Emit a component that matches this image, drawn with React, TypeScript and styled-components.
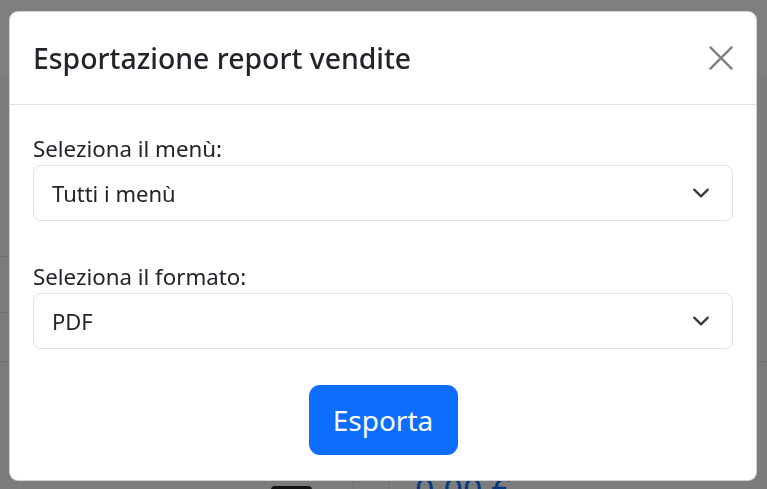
import styled, { createGlobalStyle } from 'styled-components';

const GlobalStyle = createGlobalStyle`
    * {
        box-sizing: border-box;
    }
    html, body {
        margin: 0;
        padding: 0;
        background-color: #f8f9fa;
        font-family: 'Noto Sans', 'Open Sans', sans-serif;
        color: #212529;
    }
`;

// page behind the backdrop
const Page = styled.div`
    width: 767px;
    height: 489px;
    overflow: hidden;
    display: flex;
    flex-direction: column;
`;
const Navbar = styled.div`
    height: 76px;
    background-color: #ffffff;
    flex-shrink: 0;
`;
const Content = styled.div`
    display: flex;
    flex-direction: column;
    padding-top: 125px;
`;
const SideRow = styled.div`
    width: 320px;
    height: 56px;
    border-bottom: 1px solid #dee2e6;
`;
const FullRow = styled.div`
    height: 49px;
    border-bottom: 1px solid #dee2e6;
`;
const Totals = styled.div`
    display: flex;
    align-items: flex-start;
    padding-top: 107px;
`;
const DarkButton = styled.div`
    width: 41px;
    height: 30px;
    margin: 17px 0 0 271px;
    background-color: #212529;
    border-radius: 4px;
`;
const Cell = styled.div`
    width: 36px;
    height: 40px;
    margin-left: 41px;
    border-left: 1px solid #dee2e6;
    border-right: 1px solid #dee2e6;
`;
const Amount = styled.div`
    margin-left: 26px;
    margin-top: -2px;
    font-size: 34px;
    color: #0d6efd;
`;

// modal
const Backdrop = styled.div`
    position: fixed;
    inset: 0;
    background-color: rgba(0, 0, 0, 0.5);
`;
const ModalWrap = styled.div`
    position: fixed;
    inset: 0;
    padding: 11px 10px 0 9px;
`;
const Dialog = styled.div`
    background-color: #ffffff;
    border: 1px solid rgba(0, 0, 0, 0.175);
    border-radius: 9px;
    display: flex;
    flex-direction: column;
`;
const Header = styled.div`
    height: 93px;
    display: flex;
    align-items: center;
    justify-content: space-between;
    padding: 0 19px 0 23px;
    border-bottom: 1px solid #dee2e6;
`;
const Title = styled.h5`
    margin: 0;
    font-size: 28.4px;
    font-weight: 500;
    line-height: 1.2;
    color: #212529;
`;
const CloseBtn = styled.button`
    width: 32px;
    height: 32px;
    padding: 0;
    border: none;
    background: transparent;
    display: flex;
    align-items: center;
    justify-content: center;
    color: #808080;
    cursor: pointer;
`;
const Body = styled.div`
    padding: 29px 23px 25px 23px;
    display: flex;
    flex-direction: column;
`;
const Field = styled.div<{ $gap: number }>`
    display: flex;
    flex-direction: column;
    margin-bottom: ${(props) => props.$gap}px;
`;
const Label = styled.label`
    font-size: 22.3px;
    line-height: 30px;
    margin-bottom: 1px;
    color: #212529;
`;
const SelectBox = styled.div`
    height: 56px;
    border: 1px solid #dee2e6;
    border-radius: 8px;
    display: flex;
    align-items: center;
    justify-content: space-between;
    padding: 0 22px 0 18px;
    font-size: 22px;
    color: #212529;
`;
const Actions = styled.div`
    display: flex;
    justify-content: center;
`;
const PrimaryButton = styled.button`
    width: 149px;
    height: 70px;
    border: none;
    border-radius: 11px;
    background-color: #0d6efd;
    color: #ffffff;
    font-family: inherit;
    font-size: 28px;
    cursor: pointer;
`;

function Chevron() {
    return (
        <svg width="18" height="18" viewBox="0 0 16 16" fill="none">
            <path d="m2 5 6 6 6-6" stroke="#343a40" strokeWidth="2" strokeLinecap="round" strokeLinejoin="round" />
        </svg>
    );
}

function CloseIcon() {
    return (
        <svg width="26" height="26" viewBox="0 0 16 16" fill="none">
            <path d="M1.5 1.5l13 13M14.5 1.5l-13 13" stroke="currentColor" strokeWidth="1.5" strokeLinecap="round" />
        </svg>
    );
}

interface SelectFieldProps {
    label: string;
    value: string;
    gap: number;
}
function SelectField({ label, value, gap }: SelectFieldProps) {
    return (
        <Field $gap={gap}>
            <Label>{label}</Label>
            <SelectBox>
                <span>{value}</span>
                <Chevron />
            </SelectBox>
        </Field>
    );
}

export default function App() {
    return (
        <>
            <GlobalStyle />
            <Page>
                <Navbar />
                <Content>
                    <SideRow />
                    <SideRow />
                    <FullRow />
                    <Totals>
                        <DarkButton />
                        <Cell />
                        <Amount>0.00 €</Amount>
                    </Totals>
                </Content>
            </Page>
            <Backdrop />
            <ModalWrap>
                <Dialog>
                    <Header>
                        <Title>Esportazione report vendite</Title>
                        <CloseBtn aria-label="Chiudi">
                            <CloseIcon />
                        </CloseBtn>
                    </Header>
                    <Body>
                        <SelectField label="Seleziona il menù:" value="Tutti i menù" gap={41} />
                        <SelectField label="Seleziona il formato:" value="PDF" gap={36} />
                        <Actions>
                            <PrimaryButton>Esporta</PrimaryButton>
                        </Actions>
                    </Body>
                </Dialog>
            </ModalWrap>
        </>
    );
}
